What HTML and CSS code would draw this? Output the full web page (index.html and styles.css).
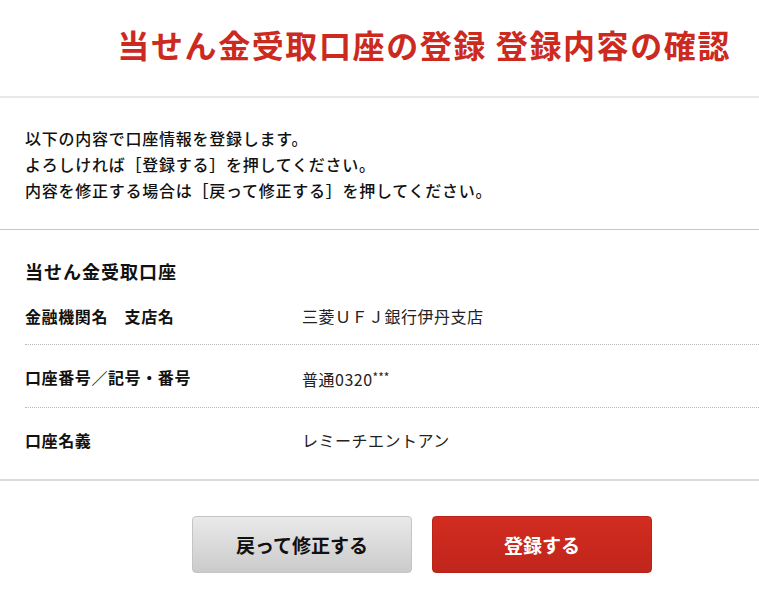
FILE: index.html
```html
<!DOCTYPE html>
<html lang="ja">
<head>
<meta charset="utf-8">
<title>登録内容の確認</title>
<link rel="stylesheet" href="styles.css">
</head>
<body>
<header class="page-header">
  <h1 class="page-title">当せん金受取口座の登録 登録内容の確認</h1>
</header>
<div class="intro">
  <p>以下の内容で口座情報を登録します。<br>よろしければ［登録する］を押してください。<br>内容を修正する場合は［戻って修正する］を押してください。</p>
</div>
<section class="account">
  <h2 class="account-title">当せん金受取口座</h2>
  <dl class="rows">
    <div class="row">
      <dt>金融機関名　支店名</dt>
      <dd>三菱ＵＦＪ銀行伊丹支店</dd>
    </div>
    <div class="row">
      <dt>口座番号／記号・番号</dt>
      <dd>普通0320<span class="mask">***</span></dd>
    </div>
    <div class="row last">
      <dt>口座名義</dt>
      <dd>レミーチエントアン</dd>
    </div>
  </dl>
</section>
<div class="actions">
  <button class="btn btn-back" type="button">戻って修正する</button>
  <button class="btn btn-submit" type="button">登録する</button>
</div>
</body>
</html>
```
FILE: styles.css
```css
* { box-sizing: border-box; }
html, body { margin: 0; padding: 0; background: #fff; }
body {
  font-family: "Noto Sans CJK JP", "Noto Sans", sans-serif;
  color: #111;
  width: 759px;
}
.page-header {
  height: 98px;
  border-bottom: 2px solid #e8e8e8;
  display: flex;
  align-items: center;
  justify-content: flex-end;
  padding-right: 28px;
}
.page-title {
  margin: 0 0 8px;
  font-size: 32px;
  line-height: 40px;
  font-weight: 700;
  color: #cc2a1f;
  letter-spacing: 1.6px;
}
.intro {
  padding: 27px 25px 26px;
  border-bottom: 1px solid #c8c8c8;
}
.intro p {
  margin: 0;
  font-size: 16px;
  line-height: 26px;
  letter-spacing: 0.75px;
  font-weight: 500;
}
.account {
  padding-top: 28px;
  padding-bottom: 27px;
  border-bottom: 2px solid #dcdcdc;
}
.account-title {
  margin: 0 0 0 25px;
  font-size: 18px;
  line-height: 26px;
  font-weight: 700;
  letter-spacing: 1px;
}
.rows { margin: 0; }
.row {
  margin-left: 25px;
  display: flex;
  padding: 20px 0 16px;
  border-bottom: 1px dotted #b8b8b8;
}
.row.last { border-bottom: none; padding-bottom: 0; }
.row dt {
  width: 277px;
  font-size: 16px;
  line-height: 24px;
  font-weight: 700;
  letter-spacing: 0.6px;
}
.row dd {
  margin: 0;
  font-size: 16px;
  line-height: 24px;
  color: #222;
  letter-spacing: 0.5px;
}
.mask { font-size: 12px; vertical-align: 4px; letter-spacing: 0; }
.actions {
  display: flex;
  gap: 20px;
  padding: 35px 0 0 192px;
}
.btn {
  width: 220px;
  height: 57px;
  border-radius: 4px;
  font-family: "Noto Sans CJK JP", "Noto Sans", sans-serif;
  font-size: 19px;
  font-weight: 700;
  cursor: pointer;
}
.btn-back {
  color: #111;
  border: 1px solid #c4c4c4;
  background: linear-gradient(#e9e9e9, #cbcbcb);
}
.btn-submit {
  color: #fff;
  border: 1px solid #b8241a;
  background: linear-gradient(#d32c20, #c0251b);
}
```
